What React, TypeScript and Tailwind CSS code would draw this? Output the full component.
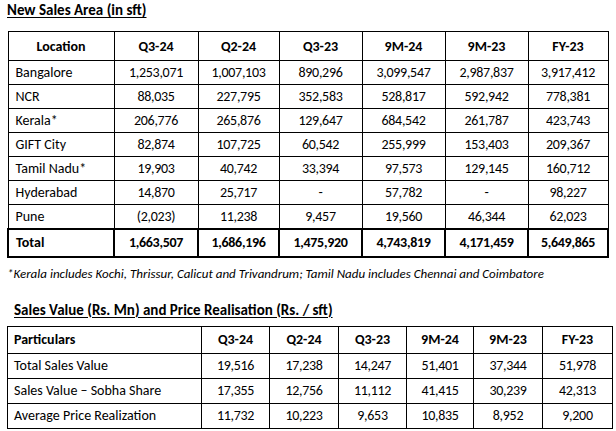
const salesArea = [
  ["Bangalore", "1,253,071", "1,007,103", "890,296", "3,099,547", "2,987,837", "3,917,412"],
  ["NCR", "88,035", "227,795", "352,583", "528,817", "592,942", "778,381"],
  ["Kerala*", "206,776", "265,876", "129,647", "684,542", "261,787", "423,743"],
  ["GIFT City", "82,874", "107,725", "60,542", "255,999", "153,403", "209,367"],
  ["Tamil Nadu*", "19,903", "40,742", "33,394", "97,573", "129,145", "160,712"],
  ["Hyderabad", "14,870", "25,717", "-", "57,782", "-", "98,227"],
  ["Pune", "(2,023)", "11,238", "9,457", "19,560", "46,344", "62,023"],
]

const total = ["Total", "1,663,507", "1,686,196", "1,475,920", "4,743,819", "4,171,459", "5,649,865"]

const salesValue = [
  ["Total Sales Value", "19,516", "17,238", "14,247", "51,401", "37,344", "51,978"],
  ["Sales Value – Sobha Share", "17,355", "12,756", "11,112", "41,415", "30,239", "42,313"],
  ["Average Price Realization", "11,732", "10,223", "9,653", "10,835", "8,952", "9,200"],
]

const periods = ["Q3-24", "Q2-24", "Q3-23", "9M-24", "9M-23", "FY-23"]

export default function App() {
  return (
    <div className="w-[616px] h-[431px] overflow-hidden bg-white text-black font-['Carlito','Calibri','Lato',sans-serif]">
      <h2 className="pl-[7px] pt-[1px] text-[15px] leading-[18px] font-bold underline underline-offset-2">
        New Sales Area (in sft)
      </h2>

      <table className="ml-[7px] mt-[12px] table-fixed border-collapse text-[14px]">
        <colgroup>
          <col className="w-[106px]" />
          <col className="w-[84px]" />
          <col className="w-[81px]" />
          <col className="w-[83px]" />
          <col className="w-[83px]" />
          <col className="w-[83px]" />
          <col className="w-[80px]" />
        </colgroup>
        <thead>
          <tr className="h-[29px] font-bold">
            <th className="border border-black text-center">Location</th>
            {periods.map((p) => (
              <th key={p} className="border border-black text-center">{p}</th>
            ))}
          </tr>
        </thead>
        <tbody>
          {salesArea.map((row) => (
            <tr key={row[0]} className="h-[24px]">
              <td className="border border-black pl-[7px]">{row[0]}</td>
              {row.slice(1).map((v, i) => (
                <td key={i} className="border border-black text-center tracking-[-0.3px]">{v}</td>
              ))}
            </tr>
          ))}
          <tr className="h-[28px] font-bold">
            <td className="border-2 border-black pl-[7px]">{total[0]}</td>
            {total.slice(1).map((v, i) => (
              <td key={i} className="border-2 border-black text-center tracking-[-0.3px]">{v}</td>
            ))}
          </tr>
        </tbody>
      </table>

      <p className="pl-[7px] mt-[8px] text-[13px] leading-[16px] italic">
        *Kerala includes Kochi, Thrissur, Calicut and Trivandrum; Tamil Nadu includes Chennai and Coimbatore
      </p>

      <h2 className="pl-[14px] mt-[19px] text-[15px] leading-[18px] font-bold underline underline-offset-2">
        Sales Value (Rs. Mn) and Price Realisation (Rs. / sft)
      </h2>

      <table className="ml-[7px] mt-[7px] table-fixed border-collapse text-[14px]">
        <colgroup>
          <col className="w-[194px]" />
          <col className="w-[68px]" />
          <col className="w-[69px]" />
          <col className="w-[68px]" />
          <col className="w-[67px]" />
          <col className="w-[69px]" />
          <col className="w-[70px]" />
        </colgroup>
        <thead>
          <tr className="h-[27px] font-bold">
            <th className="border border-black text-left pl-[6px]">Particulars</th>
            {periods.map((p) => (
              <th key={p} className="border border-black text-center">{p}</th>
            ))}
          </tr>
        </thead>
        <tbody>
          {salesValue.map((row) => (
            <tr key={row[0]} className="h-[25px]">
              <td className="border border-black pl-[6px]">{row[0]}</td>
              {row.slice(1).map((v, i) => (
                <td key={i} className="border border-black text-center tracking-[-0.3px]">{v}</td>
              ))}
            </tr>
          ))}
        </tbody>
      </table>
    </div>
  )
}
